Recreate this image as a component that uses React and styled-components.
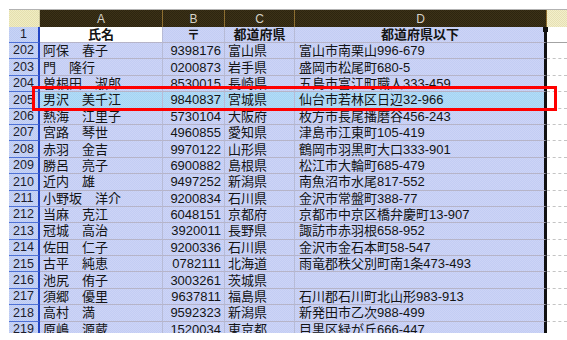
import React from "react";
import styled, { createGlobalStyle, css } from "styled-components";

const GlobalStyle = createGlobalStyle`
  html, body {
    margin: 0;
    padding: 0;
    background: #ffffff;
  }
  body {
    font-family: "Liberation Sans", "Noto Sans CJK JP", sans-serif;
  }
`;

const COLS = "31px 123px 62px 70px 252px 1fr";

const dither = (base, dot) => css`
  background-color: ${base};
  background-image: repeating-conic-gradient(${dot} 0 25%, transparent 0 50%);
  background-size: 2px 2px;
`;

const rows = [
  ["202", "阿保　春子", "9398176", "富山県", "富山市南栗山996-679"],
  ["203", "門　隆行", "0200873", "岩手県", "盛岡市松尾町680-5"],
  ["204", "曽根田　淑郎", "8530015", "長崎県", "五島市富江町職人333-459"],
  ["205", "男沢　美千江", "9840837", "宮城県", "仙台市若林区日辺32-966", true],
  ["206", "熱海　江里子", "5730104", "大阪府", "枚方市長尾播磨谷456-243"],
  ["207", "宮路　琴世", "4960855", "愛知県", "津島市江東町105-419"],
  ["208", "赤羽　金吉", "9970122", "山形県", "鶴岡市羽黒町大口333-901"],
  ["209", "勝呂　亮子", "6900882", "島根県", "松江市大輪町685-479"],
  ["210", "近内　雄", "9497252", "新潟県", "南魚沼市水尾817-552"],
  ["211", "小野坂　洋介", "9200834", "石川県", "金沢市常盤町388-77"],
  ["212", "当麻　克江", "6048151", "京都府", "京都市中京区橋弁慶町13-907"],
  ["213", "冠城　高治", "3920011", "長野県", "諏訪市赤羽根658-952"],
  ["214", "佐田　仁子", "9200336", "石川県", "金沢市金石本町58-547"],
  ["215", "古平　純恵", "0782111", "北海道", "雨竜郡秩父別町南1条473-493"],
  ["216", "池尻　侑子", "3003261", "茨城県", ""],
  ["217", "須郷　優里", "9637811", "福島県", "石川郡石川町北山形983-913"],
  ["218", "高村　満", "9592323", "新潟県", "新発田市乙次988-499"],
  ["219", "原嶋　源蔵", "1520034", "東京都", "目黒区緑が丘666-447"],
];

const App = () => {
  return (
    <Page>
      <GlobalStyle />
      <Sheet>
        <HeaderRow>
          <Corner />
          <ColHead>A</ColHead>
          <ColHead>B</ColHead>
          <ColHead>C</ColHead>
          <ColHead>D</ColHead>
          <ColHeadFree />
        </HeaderRow>

        <Row $h={16}>
          <RowHead>1</RowHead>
          <Cell $white $align="center" $bold>氏名</Cell>
          <Cell $align="center" $bold>〒</Cell>
          <Cell $align="center" $bold>都道府県</Cell>
          <LastCell $align="center" $bold $handle>都道府県以下</LastCell>
          <Free $solid />
        </Row>

        {rows.map((r) => (
          <Row key={r[0]}>
            <RowHead>{r[0]}</RowHead>
            <Cell $hl={r[5]}>{r[1]}</Cell>
            <Cell $hl={r[5]} $align="right">{r[2]}</Cell>
            <Cell $hl={r[5]}>{r[3]}</Cell>
            <LastCell $hl={r[5]}>{r[4]}</LastCell>
            <Free />
          </Row>
        ))}

        <Marker />
      </Sheet>
    </Page>
  );
};

const Page = styled.div`
  box-sizing: border-box;
  width: 567px;
  height: 340px;
  padding: 9px 0 0 9px;
  overflow: hidden;
  background: #ffffff;
`;

const Sheet = styled.div`
  position: relative;
  height: 323px;
  overflow: hidden;
  border-top: 1px solid #b2b2b2;
`;

const HeaderRow = styled.div`
  display: grid;
  grid-template-columns: ${COLS};
  grid-template-rows: 17px;
  height: 17px;
`;

const Corner = styled.div`
  ${dither("#f1edc4", "#e4dfae")}
  border-right: 1px solid #c8c29a;
`;

const ColHead = styled.div`
  ${dither("#3d3217", "#2c2410")}
  border-right: 1px solid #8e6e30;
  color: #d6d2c8;
  font-size: 12px;
  line-height: 1;
  display: flex;
  align-items: center;
  justify-content: center;
`;

const ColHeadFree = styled.div`
  ${dither("#f3efcb", "#e6e0b4")}
`;

const Row = styled.div`
  display: grid;
  grid-template-columns: ${COLS};
  grid-template-rows: ${({ $h }) => $h || 16.4}px;
  height: ${({ $h }) => $h || 16.4}px;
  overflow: hidden;
`;

const RowHead = styled.div`
  ${dither("#bccaf2", "#c8d4f6")}
  border-right: 2px solid #2446c4;
  border-bottom: 1px solid #4f72d6;
  box-sizing: border-box;
  min-height: 0;
  color: #1c1c2c;
  font-size: 12.5px;
  line-height: 1;
  display: flex;
  align-items: center;
  justify-content: center;
`;

const Cell = styled.div`
  ${({ $white, $hl }) =>
    $white
      ? css`
          background: #ffffff;
        `
      : $hl
      ? dither("#a6d4f4", "#b2dcf6")
      : dither("#c3cdf4", "#cdd4f6")}
  box-sizing: border-box;
  min-height: 0;
  border-right: 1px solid #b7bbd6;
  border-bottom: 1px solid #b6b4c8;
  color: #141414;
  font-size: 13px;
  line-height: 1;
  font-weight: ${({ $bold }) => ($bold ? 700 : 400)};
  white-space: nowrap;
  overflow: hidden;
  display: flex;
  align-items: center;
  justify-content: ${({ $align }) =>
    $align === "center" ? "center" : $align === "right" ? "flex-end" : "flex-start"};
  padding: 0 3px 0 3px;
`;

const LastCell = styled(Cell)`
  position: relative;
  overflow: visible;
  border-right: 3px solid #121212;
  padding-left: 4px;

  ${({ $handle }) =>
    $handle &&
    css`
      &::after {
        content: "";
        position: absolute;
        right: -4px;
        top: 0;
        width: 5px;
        height: 5px;
        background: #121212;
      }
    `}
`;

const Free = styled.div`
  background: #ffffff;
  box-sizing: border-box;
  min-height: 0;
  border-bottom: 1px ${({ $solid }) => ($solid ? "solid #a3a3a3" : "dashed #c4c4c4")};
`;

const Marker = styled.div`
  position: absolute;
  left: 23px;
  top: 76px;
  width: 525px;
  height: 25px;
  box-sizing: border-box;
  border: 3px solid #ff0000;
  pointer-events: none;
`;

export default App;
